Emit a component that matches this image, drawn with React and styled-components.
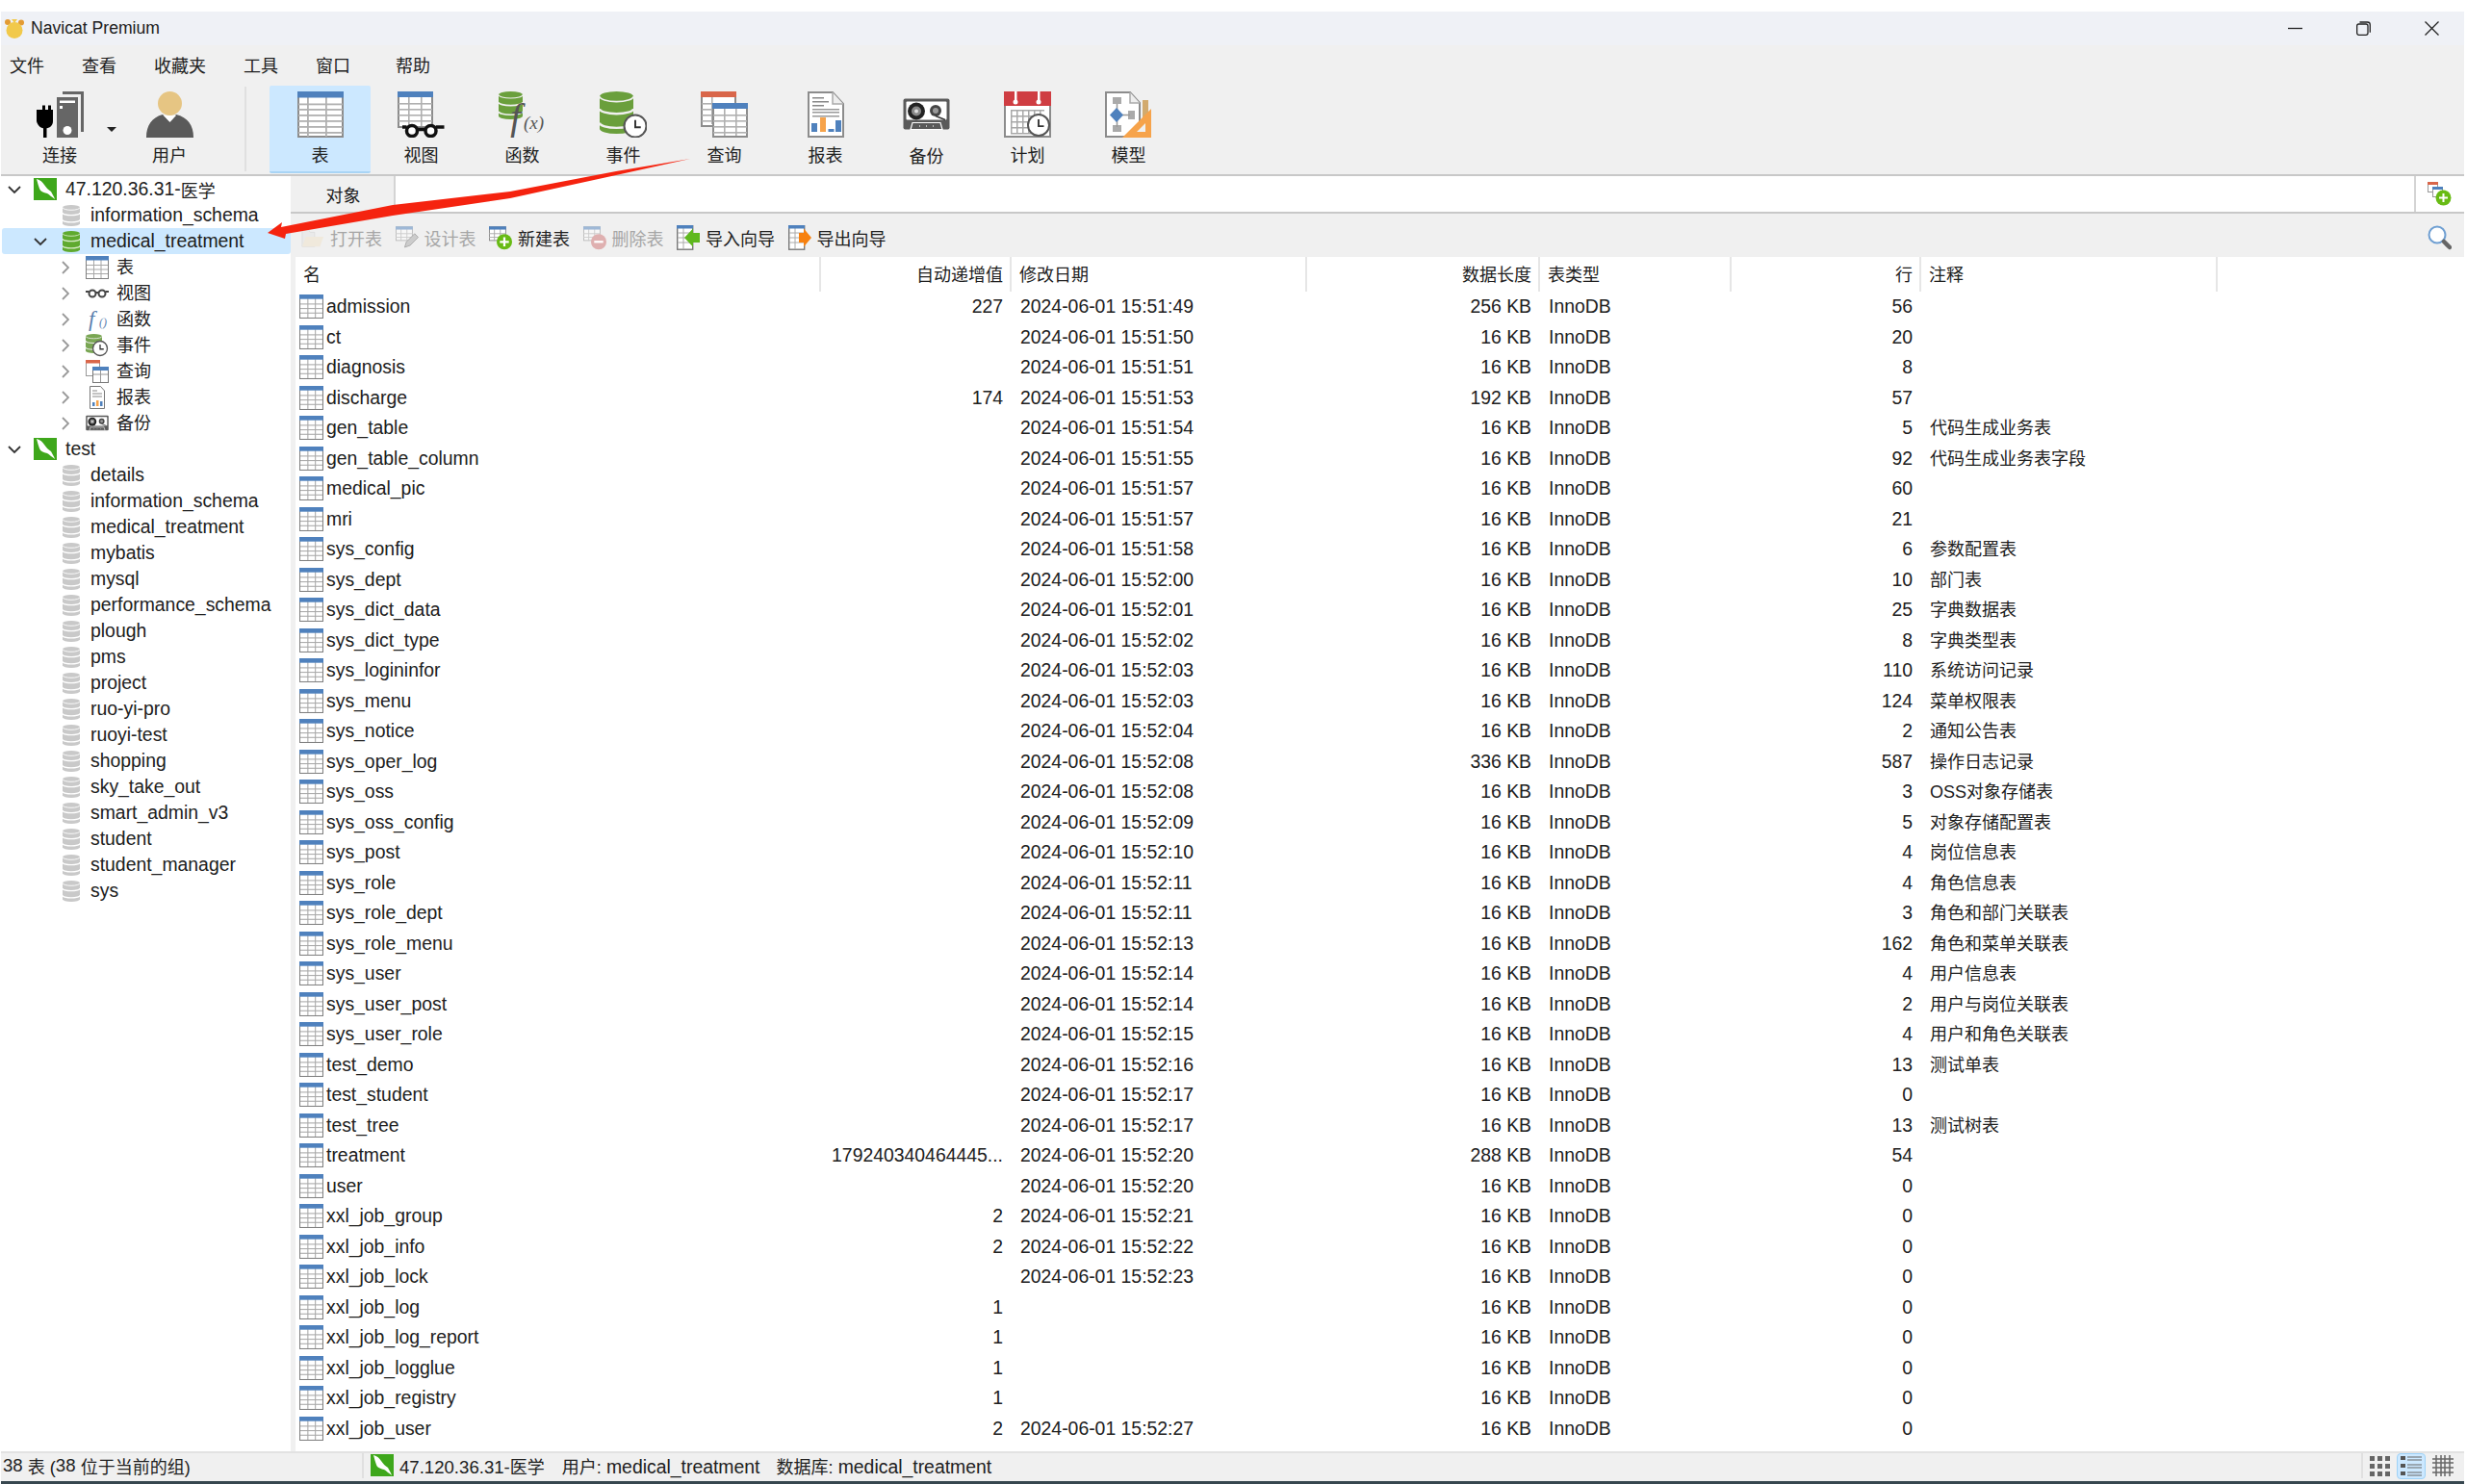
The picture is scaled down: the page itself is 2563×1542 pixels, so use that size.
import React from 'react';
import styled, { createGlobalStyle } from 'styled-components';

const GlobalStyle = createGlobalStyle`
  html, body { margin: 0; padding: 0; background: #ffffff; }
  body {
    font-family: 'Liberation Sans', 'Noto Sans CJK SC', sans-serif;
    font-size: 19.4px;
    color: #202020;
  }
  * { box-sizing: border-box; }
`;

const Page = styled.div`
  position: relative;
  width: 2563px;
  height: 1542px;
  padding: 12px 3px 0 1px;
  background: #ffffff;
  overflow: hidden;
`;

const Window = styled.div`
  display: flex;
  flex-direction: column;
  height: 100%;
  background: #f0f0f0;
`;

const TitleBar = styled.div`
  display: flex;
  align-items: center;
  height: 35px;
  padding: 0 26px 0 3px;
  background: #eff1f6;
  font-size: 17.6px;
  flex: none;
`;

const TitleText = styled.span`
  margin-left: 6px;
`;

const WinControls = styled.div`
  display: flex;
  align-items: center;
  gap: 56px;
  margin-left: auto;
`;

const MenuBar = styled.div`
  display: flex;
  align-items: center;
  gap: 39px;
  height: 42px;
  padding: 0 0 2px 9px;
  font-size: 18px;
  flex: none;

  & > span:last-child { margin-left: 8px; }
`;

const ToolBar = styled.div`
  display: flex;
  height: 94px;
  padding-left: 7px;
  border-bottom: 2px solid #c8c8c8;
  flex: none;
`;

const ToolBtn = styled.div`
  display: flex;
  flex-direction: column;
  align-items: center;
  width: ${p => p.$w || 105}px;
  height: 91px;
  padding-top: 6px;
  background: ${p => (p.$active ? '#cce8ff' : 'transparent')};
  border-bottom: ${p => (p.$active ? '2px solid #a8d4f5' : 'none')};
  border-radius: 2px;
  font-size: 18px;
  flex: none;
`;

const ToolLabel = styled.span`
  margin-top: 7px;
  line-height: 24px;
`;

const Caret = styled.div`
  width: 0;
  height: 0;
  margin: 43px 9px 0 -5px;
  border-left: 5px solid transparent;
  border-right: 5px solid transparent;
  border-top: 5px solid #222;
  flex: none;
`;

const ToolSep = styled.div`
  width: 2px;
  height: 88px;
  margin: 1px 24px 0 32px;
  background: #e0e0e0;
  flex: none;
`;

const Body = styled.div`
  display: flex;
  flex: 1;
  min-height: 0;
`;

const Sidebar = styled.div`
  width: 301px;
  background: #ffffff;
  padding-left: 1px;
  flex: none;
`;

const TreeRow = styled.div`
  display: flex;
  align-items: center;
  height: 27px;
  padding-left: ${p => [6, 33, 62][p.$level]}px;
  background: ${p => (p.$selected ? '#cce8ff' : 'transparent')};
  border-radius: 3px;
  white-space: nowrap;
`;

const ChevronSlot = styled.div`
  display: flex;
  align-items: center;
  width: ${p => [27, 30, 25][p.$level]}px;
  flex: none;
`;

const TreeIconBox = styled.div`
  display: flex;
  justify-content: center;
  width: ${p => [24, 18, 24][p.$level]}px;
  margin-right: ${p => [9, 11, 8][p.$level]}px;
  flex: none;
`;

const Cjk = styled.span`
  font-size: 18px;
`;

const TreeLabel = styled(Cjk)`
  margin-bottom: 3px;
`;

const Main = styled.div`
  display: flex;
  flex-direction: column;
  flex: 1;
  min-width: 0;
`;

const TabBar = styled.div`
  display: flex;
  height: 39px;
  background: #ffffff;
  border-bottom: 2px solid #c8c8c8;
  flex: none;
`;

const Tab = styled.div`
  display: flex;
  align-items: center;
  justify-content: center;
  width: 109px;
  padding-left: 2px;
  background: #f0f0f0;
  border-right: 2px solid #d4d4d4;
  font-size: 18px;
`;

const TabAdd = styled.div`
  display: flex;
  align-items: center;
  justify-content: center;
  width: 52px;
  margin-left: auto;
  border-left: 2px solid #d4d4d4;
  padding-right: 2px;
`;

const ActionBar = styled.div`
  display: flex;
  align-items: center;
  gap: 13.5px;
  height: 45px;
  padding: 5px 13px 0 11px;
  font-size: 18px;
  flex: none;
`;

const Action = styled.div`
  display: flex;
  align-items: center;
  gap: 6px;
  color: ${p => (p.$disabled ? '#a6a6a6' : '#202020')};
`;

const SearchBtn = styled.div`
  display: flex;
  margin-left: auto;
`;

const Table = styled.div`
  flex: 1;
  margin-left: 5px;
  background: #ffffff;
  min-height: 0;
`;

const columns = '546px 198px 307px 242px 199px 197px 308px 1fr';

const HeadRow = styled.div`
  display: grid;
  grid-template-columns: ${columns};
  height: 36px;
  font-size: 18px;
`;

const HeadCell = styled.div`
  display: flex;
  align-items: center;
  justify-content: ${p => (p.$right ? 'flex-end' : 'flex-start')};
  padding: 0 7px 2px 8px;
  border-right: ${p => (p.$last ? 'none' : '2px solid #e6e6e6')};
`;

const DataRow = styled.div`
  display: grid;
  grid-template-columns: ${columns};
  height: 31.5px;
`;

const Cell = styled.div`
  display: flex;
  align-items: center;
  justify-content: ${p => (p.$right ? 'flex-end' : 'flex-start')};
  padding: 0 9px;
  white-space: nowrap;
  overflow: hidden;
`;

const NameCell = styled(Cell)`
  gap: 3px;
  padding-left: 4px;
`;

const Comment = styled(Cell)`
  padding-bottom: 3px;
  font-size: 18px;
`;

const StatusBar = styled.div`
  display: flex;
  align-items: center;
  height: 31px;
  padding: 0 0 3px 2px;
  background: #f0f0f0;
  border-top: 2px solid #e2e2e2;
  font-size: 18.6px;
  flex: none;
`;

const StatusCount = styled.div`
  width: 373px;
  height: 100%;
  display: flex;
  align-items: center;
  white-space: pre;
  flex: none;
`;

const StatusInfo = styled.div`
  display: flex;
  align-items: center;
  height: 100%;
  padding-left: 7px;
  border-left: 2px solid #e0e0e0;
`;

const StatusItem = styled.span`
  margin-left: ${p => p.$gap || 0}px;
`;

const StatusValue = styled.span`
  font-size: 19.4px;
`;

const ViewSwitch = styled.div`
  display: flex;
  align-items: center;
  gap: 7px;
  height: 100%;
  margin-left: auto;
  padding: 0 11px 0 7px;
  border-left: 2px solid #e0e0e0;
`;

const ViewBtn = styled.div`
  display: flex;
  align-items: center;
  justify-content: center;
  width: ${p => (p.$active ? '30px' : 'auto')};
  height: 27px;
  background: ${p => (p.$active ? '#cce8ff' : 'transparent')};
  border: ${p => (p.$active ? '1.5px solid #9fd2f7' : 'none')};
  border-radius: 4px;
`;

const BottomEdge = styled.div`
  height: 3px;
  background: #37474f;
  flex: none;
`;

const ArrowLayer = styled.svg`
  position: absolute;
  left: 0;
  top: 0;
  pointer-events: none;
`;

const BLUE = '#4f81bd';
const GREEN = '#6a9f3c';

const TableIcon = () => (
  <svg width="48" height="48" viewBox="0 0 48 48">
    <rect x="1" y="1" width="46" height="46" fill="#fff" stroke="#8c8c8c" strokeWidth="2" />
    {[12.5, 18, 24, 30, 36, 42].map(y => (
      <rect key={y} x="1" y={y} width="46" height="1.800" fill="#b0b0b0" />
    ))}
    {[10, 29].map(x => (
      <rect key={x} x={x} y="6" width="1.800" height="41" fill="#b0b0b0" />
    ))}
    <rect width="48" height="6.500" fill={BLUE} />
  </svg>
);

const SmallTable = ({ size = 24 }) => (
  <svg width={size} height={size} viewBox="0 0 24 24">
    <rect x="0.500" y="0.500" width="23" height="23" fill="#fff" stroke="#808080" />
    {[9, 13.5, 18].map(y => (
      <rect key={y} x="1" y={y} width="22" height="1" fill="#a8a8a8" />
    ))}
    {[8, 15.5].map(x => (
      <rect key={x} x={x} y="4" width="1" height="19" fill="#a8a8a8" />
    ))}
    <rect width="24" height="4.500" fill={BLUE} />
  </svg>
);

const Cylinder = ({ x, y, w, h, color, band = '#fff' }) => {
  const rx = w / 2;
  const ry = h * 0.12;
  const layer = h / 3;
  return (
    <g>
      <path
        d={`M${x} ${y + ry}a${rx} ${ry} 0 0 1 ${w} 0v${h - 2 * ry}a${rx} ${ry} 0 0 1 ${-w} 0z`}
        fill={color}
      />
      {[1, 2].map(i => (
        <path
          key={i}
          d={`M${x} ${y + ry + layer * i - 2}a${rx} ${ry} 0 0 0 ${w} 0`}
          fill="none"
          stroke={band}
          strokeWidth={h * 0.055}
        />
      ))}
      <path d={`M${x} ${y + ry}a${rx} ${ry} 0 0 0 ${w} 0`} fill="none" stroke={band} strokeWidth={h * 0.04} />
    </g>
  );
};

const Clock = ({ cx, cy, r }) => (
  <g>
    <circle cx={cx} cy={cy} r={r} fill="#fff" stroke="#555" strokeWidth={r * 0.18} />
    <path d={`M${cx} ${cy - r * 0.55}V${cy + r * 0.1}H${cx + r * 0.5}`} fill="none" stroke="#333" strokeWidth={r * 0.17} />
  </g>
);

const PlugIcon = () => (
  <svg width="49" height="48" viewBox="0 0 49 48">
    <path d="M27 0h22v42h-3V3H27z" fill="#666" />
    <rect x="21" y="6" width="22" height="42" fill="#666" />
    <rect x="24" y="9.500" width="16" height="2.500" fill="#fff" />
    <rect x="24" y="15" width="3" height="3" fill="#fff" />
    <circle cx="32" cy="40.500" r="4.500" fill="#fff" />
    <path d="M3 19h3v-4.500h3V19h3v-4.500h3V19h2v12c0 4-3 7-6.500 7.300V48h-3.500v-9.700C4 38 1 35 0 31V19z" fill="#000" />
  </svg>
);

const UserIcon = () => (
  <svg width="49" height="48" viewBox="0 0 49 48">
    <path d="M0 48c0-13 6-21 17-24l7 7 7-7c12 3 18 11 18 24z" fill="#5a5a5a" />
    <path d="M18 25h13l-6.500 7z" fill="#fff" />
    <ellipse cx="24.500" cy="12.500" rx="12.500" ry="12.500" fill="#e6c583" />
  </svg>
);

const Glasses = () => (
  <g fill="#fff" stroke="#111" strokeWidth="3.500">
    <circle cx="15" cy="41" r="5.500" />
    <circle cx="34.500" cy="41" r="5.500" />
    <path d="M5 37h4.500M20.500 39.500h8.500M40 37h8.500" fill="none" />
  </g>
);

const ViewIcon = () => (
  <svg width="49" height="48" viewBox="0 0 49 48">
    <rect x="1" y="1" width="35" height="36" fill="#fff" stroke="#8c8c8c" strokeWidth="2" />
    {[12, 18, 24, 30].map(y => (
      <rect key={y} x="1" y={y} width="35" height="1.600" fill="#b0b0b0" />
    ))}
    {[11, 24].map(x => (
      <rect key={x} x={x} y="6" width="1.600" height="30" fill="#b0b0b0" />
    ))}
    <rect width="37" height="6" fill={BLUE} />
    <Glasses />
  </svg>
);

const FuncIcon = () => (
  <svg width="49" height="48" viewBox="0 0 49 48">
    <Cylinder x={0} y={0} w={25} h={29} color={GREEN} band="#f0f0f0" />
    <text x="12" y="40" fontFamily="Liberation Serif, serif" fontStyle="italic" fontSize="40" fill="#555">f</text>
    <text x="26" y="39" fontFamily="Liberation Serif, serif" fontStyle="italic" fontSize="19" fill="#555">(x)</text>
  </svg>
);

const EventIcon = () => (
  <svg width="49" height="48" viewBox="0 0 49 48">
    <Cylinder x={0} y={0} w={35} h={44} color={GREEN} band="#f0f0f0" />
    <Clock cx={37} cy={36} r={11.500} />
  </svg>
);

const QueryIcon = () => (
  <svg width="49" height="48" viewBox="0 0 49 48">
    <rect x="1" y="1" width="35" height="35" fill="#fff" stroke="#8c8c8c" strokeWidth="2" />
    {[12, 18, 24, 30].map(y => (
      <rect key={y} x="1" y={y} width="14" height="1.600" fill="#b0b0b0" />
    ))}
    <rect x="11" y="6" width="1.600" height="28" fill="#b0b0b0" />
    <rect width="37" height="6" fill="#d9664a" />
    <rect x="13" y="13" width="35" height="34" fill="#fff" stroke="#8c8c8c" strokeWidth="2" />
    {[24, 30, 36, 42].map(y => (
      <rect key={y} x="13" y={y} width="35" height="1.600" fill="#b0b0b0" />
    ))}
    {[24, 36].map(x => (
      <rect key={x} x={x} y="18" width="1.600" height="28" fill="#b0b0b0" />
    ))}
    <rect x="12" y="12" width="37" height="6" fill={BLUE} />
  </svg>
);

const ReportIcon = () => (
  <svg width="49" height="48" viewBox="0 0 49 48">
    <path d="M7 1h25l11 12v34H7z" fill="#fff" stroke="#8c8c8c" strokeWidth="2" />
    <path d="M32 1v12h11" fill="#eee" stroke="#aaa" strokeWidth="1.500" />
    {[6, 10, 14].map(y => (
      <rect key={y} x="11" y={y} width={y === 10 ? 17 : 12} height="1.500" fill="#888" />
    ))}
    {[18, 21, 25].map(y => (
      <rect key={y} x="11" y={y} width="28" height="1.500" fill="#999" />
    ))}
    <rect x="10" y="33" width="6" height="9" fill={BLUE} />
    <rect x="19" y="27" width="6" height="15" fill="#f6a34b" />
    <rect x="27.500" y="39" width="6" height="3" fill={BLUE} />
    <rect x="35" y="30" width="6" height="12" fill={BLUE} />
  </svg>
);

const BackupIcon = ({ size = 49 }) => (
  <svg width={size} height={size} viewBox="0 0 49 48">
    <rect x="0.500" y="7" width="48" height="32" rx="2" fill="#5a5a5a" />
    <rect x="3.500" y="10" width="42" height="19" rx="1" fill="#fff" />
    <circle cx="14" cy="20" r="9" fill="#222" />
    <circle cx="14" cy="20" r="5" fill="#888" />
    <circle cx="14" cy="20" r="2" fill="#ddd" />
    <circle cx="34" cy="19.500" r="6" fill="#444" />
    <circle cx="34" cy="19.500" r="3" fill="#999" />
    <path d="M34 25l10 4" stroke="#333" strokeWidth="1.500" />
    <path d="M8 39l2-7h29l2 7z" fill="#5a5a5a" stroke="#fff" strokeWidth="1.200" />
    <path d="M17 35.500h1M24 35.500h1M31 35.500h1" stroke="#ddd" strokeWidth="1.500" />
  </svg>
);

const CalendarIcon = () => (
  <svg width="49" height="48" viewBox="0 0 49 48">
    <rect x="1" y="1" width="47" height="46" fill="#fff" stroke="#8c8c8c" strokeWidth="2" />
    <rect width="49" height="15" fill="#cf3d42" />
    {[12, 36].map(x => (
      <g key={x}>
        <rect x={x - 1} y="0" width="2.500" height="10" fill="#fff" />
        <circle cx={x} cy="11" r="2.500" fill="#fff" />
      </g>
    ))}
    {[6, 12, 18, 24, 30, 36].map(x => (
      <rect key={x} x={x + 1} y="19" width="1.500" height="24" fill="#a8a8a8" />
    ))}
    {[19, 25, 31, 37, 43].map(y => (
      <rect key={y} x="7" y={y} width="35" height="1.500" fill="#a8a8a8" />
    ))}
    <Clock cx={36} cy={35} r={11} />
  </svg>
);

const ModelIcon = () => (
  <svg width="49" height="48" viewBox="0 0 49 48">
    <path d="M1 1h25l10 11v35H1z" fill="#fff" stroke="#8c8c8c" strokeWidth="2" />
    <path d="M26 1v11h10" fill="#eee" stroke="#aaa" strokeWidth="1.500" />
    <rect x="8" y="6" width="9" height="7" fill="#aaa" />
    <rect x="8" y="35" width="9" height="7" fill="#aaa" />
    <rect x="24" y="20" width="7" height="9" fill="#aaa" />
    <path d="M12.500 13v24M18 24.500h8" stroke="#999" strokeWidth="1.500" />
    <path d="M12 17l7 7.500-7 7.500-7-7.500z" fill={BLUE} />
    <rect x="39" y="9" width="6" height="24" fill="#d2aa6e" />
    <path d="M48 18v30H18z" fill="#f6a34b" />
    <path d="M42 33v9h-9z" fill="#f0f0f0" />
  </svg>
);

const FolderIcon = () => (
  <svg width="24" height="24" viewBox="0 0 26 24" opacity="0.55">
    <path d="M1 22V3h7l2 3h5v16z" fill="#e6e6e6" stroke="#cfcfcf" />
    <path d="M1 22l4-11h20l-4 11z" fill="#f0e4cc" />
  </svg>
);

const BadgeTable = ({ children, opacity = 1 }) => (
  <svg width="24" height="25" viewBox="0 0 25.500 26">
    <g opacity={opacity}>
      <rect x="0.500" y="0.500" width="18" height="15" fill="#fff" stroke="#888" />
      <path d="M0 8h19M0 12h19M6 3v13M12.500 3v13" stroke="#aaa" />
      <rect width="19" height="3.500" fill={BLUE} />
    </g>
    {children}
  </svg>
);

const ImportExportIcon = ({ color, flip }) => (
  <svg width="24" height="26" viewBox="0 0 24 26">
    <rect x="0.700" y="0.700" width="16" height="24.500" fill="#fff" stroke="#777" strokeWidth="1.400" />
    <path d="M1 8h16M1 13h16M1 18h16M7 3v22" stroke="#aaa" />
    <rect width="17" height="3.500" fill={BLUE} />
    <path d={flip ? 'M11 8h5V3.500L24 13l-8 9.500V18h-5z' : 'M24 8h-7V3.500L8 13l9 9.500V18h7z'} fill={color} />
  </svg>
);

const Search = () => (
  <svg width="25" height="26" viewBox="0 0 25 26">
    <circle cx="10" cy="10" r="8.500" fill="#fff" stroke="#6f9fd2" strokeWidth="2" />
    <path d="M17 17l6 6" stroke="#666" strokeWidth="4.500" strokeLinecap="round" />
  </svg>
);

const AddTab = () => (
  <svg width="25" height="25" viewBox="0 0 25 25">
    <rect x="0.500" y="0.500" width="10" height="10" fill="#fff" stroke="#999" />
    <rect width="11" height="3" fill="#d9664a" />
    <rect x="5.500" y="5.500" width="10" height="10" fill="#fff" stroke="#999" />
    <rect x="5" y="5" width="11" height="3" fill={BLUE} />
    <circle cx="16.500" cy="16.500" r="8" fill="#68bb14" />
    <path d="M16.500 12v9M12 16.500h9" stroke="#fff" strokeWidth="2" />
  </svg>
);

const LogoIcon = () => (
  <svg width="22" height="21" viewBox="0 0 22 21">
    <circle cx="4" cy="4" r="3" fill="#e39b34" />
    <circle cx="18" cy="4.500" r="3" fill="#e39b34" />
    <circle cx="11" cy="12.500" r="8.500" fill="#f1c94b" />
    <path d="M8 1h6l-3 4z" fill="#f1c94b" />
  </svg>
);

const Minimize = () => (
  <svg width="15" height="15" viewBox="0 0 15 15">
    <path d="M0 7.500h15" stroke="#222" strokeWidth="1.300" />
  </svg>
);

const Restore = () => (
  <svg width="15" height="15" viewBox="0 0 15 15">
    <rect x="0.700" y="3" width="11.300" height="11.300" rx="2" fill="none" stroke="#222" strokeWidth="1.300" />
    <path d="M3.500 1h8c1.600 0 2.800 1.200 2.800 2.800v8" fill="none" stroke="#222" strokeWidth="1.300" />
  </svg>
);

const Close = () => (
  <svg width="15" height="15" viewBox="0 0 15 15">
    <path d="M0.500 0.500l14 14M14.500 0.500l-14 14" stroke="#222" strokeWidth="1.300" />
  </svg>
);

const Chevron = ({ open, small }) => (
  <svg width={small ? 8 : 14} height="14" viewBox={small ? '0 0 8 14' : '0 0 14 14'}>
    <path
      d={small ? 'M1 1l6 6-6 6' : 'M1 4l6 6 6-6'}
      fill="none"
      stroke={open ? '#333' : '#999'}
      strokeWidth="1.800"
    />
  </svg>
);

const MySql = ({ size = 24 }) => (
  <svg width={size} height={size} viewBox="0 0 24 24">
    <rect width="24" height="23" fill="#3ea71b" />
    <path d="M3 1c4 1 6 3 8 6 2 3 4 5 7 7 1 2 3 5 4 8-3-2-6-5-8-6-4-1-7-2-8-5-1-3-2-6-3-10z" fill="#fff" />
  </svg>
);

const DbIcon = ({ on }) => (
  <svg width="18" height="22" viewBox="0 0 18 22">
    <Cylinder x={0} y={0} w={18} h={22} color={on ? '#5faa2f' : '#c9c9c9'} band={on ? '#d8ecc8' : '#fff'} />
  </svg>
);

const TreeGlasses = () => (
  <svg width="24" height="22" viewBox="0 0 24 22">
    <g fill="none" stroke="#444" strokeWidth="2">
      <circle cx="7" cy="11" r="3.500" />
      <circle cx="17" cy="11" r="3.500" />
      <path d="M0 9h3.500M10.500 10h3M20.500 9h3.500" />
    </g>
  </svg>
);

const TreeFunc = () => (
  <svg width="24" height="24" viewBox="0 0 24 24">
    <text x="3" y="19" fontFamily="Liberation Serif, serif" fontStyle="italic" fontSize="23" fill="#5b7fae">f</text>
    <text x="14" y="19" fontFamily="Liberation Serif, serif" fontStyle="italic" fontSize="12" fill="#5b7fae">()</text>
  </svg>
);

const TreeEvent = () => (
  <svg width="24" height="24" viewBox="0 0 24 24">
    <Cylinder x={0} y={0} w={17} h={20} color="#79a653" band="#eee" />
    <Clock cx={15} cy={15} r={7.500} />
  </svg>
);

const TreeQuery = () => (
  <svg width="24" height="24" viewBox="0 0 24 24">
    <rect x="0.500" y="0.500" width="14" height="16" fill="#fff" stroke="#999" />
    <rect width="15" height="3.500" fill="#d9664a" />
    <rect x="7.500" y="7.500" width="16" height="16" fill="#fff" stroke="#777" />
    <path d="M8 15h15M15.500 11v12" stroke="#999" />
    <rect x="7" y="7" width="17" height="4" fill={BLUE} />
  </svg>
);

const TreeReport = () => (
  <svg width="24" height="24" viewBox="0 0 24 24">
    <path d="M4.500 0.500h11l4 4.500v18.500h-15z" fill="#fff" stroke="#777" />
    <path d="M7 5h5M7 8h10M7 11h10" stroke="#888" />
    <rect x="7" y="17" width="2.500" height="4" fill={BLUE} />
    <rect x="11" y="15" width="2.500" height="6" fill="#f6a34b" />
    <rect x="15" y="16" width="2.500" height="5" fill={BLUE} />
  </svg>
);

const dots = [0, 1, 2];

const ViewDots = () => (
  <svg width="21" height="21" viewBox="0 0 21 21">
    {dots.map(r => dots.map(c => <rect key={`${r}${c}`} x={c * 8} y={r * 8} width="5" height="5" fill="#666" />))}
  </svg>
);

const ViewList = () => (
  <svg width="22" height="22" viewBox="0 0 22 22">
    {dots.map(r => (
      <g key={r}>
        <rect x="0" y={1 + r * 8} width="5" height="4" fill="#555" />
        <path d={`M7 ${2 + r * 8}h15M7 ${5 + r * 8}h15`} stroke="#666" strokeWidth="1.200" />
      </g>
    ))}
  </svg>
);

const ViewGrid = () => (
  <svg width="22" height="22" viewBox="0 0 22 22">
    <path d="M0 4h22M0 8h22M0 13h22M0 18h22M4 0v22M9 0v22M13 0v22M18 0v22" stroke="#666" strokeWidth="1.500" fill="none" />
  </svg>
);

const tools = [
  { label: '视图', icon: <ViewIcon /> },
  { label: '函数', icon: <FuncIcon /> },
  { label: '事件', icon: <EventIcon /> },
  { label: '查询', icon: <QueryIcon /> },
  { label: '报表', icon: <ReportIcon /> },
  { label: '备份', icon: <BackupIcon /> },
  { label: '计划', icon: <CalendarIcon /> },
  { label: '模型', icon: <ModelIcon /> }
];

const treeChildren = [
  { label: '表', icon: <SmallTable /> },
  { label: '视图', icon: <TreeGlasses /> },
  { label: '函数', icon: <TreeFunc /> },
  { label: '事件', icon: <TreeEvent /> },
  { label: '查询', icon: <TreeQuery /> },
  { label: '报表', icon: <TreeReport /> },
  { label: '备份', icon: <BackupIcon size={24} /> }
];

const testDbs = [
  'details', 'information_schema', 'medical_treatment', 'mybatis', 'mysql',
  'performance_schema', 'plough', 'pms', 'project', 'ruo-yi-pro', 'ruoyi-test',
  'shopping', 'sky_take_out', 'smart_admin_v3', 'student', 'student_manager', 'sys'
];

const d = t => `2024-06-01 15:${t}`;

// name, auto increment, time, data length, rows, comment
const rows = [
  ['admission', '227', d('51:49'), '256 KB', '56', ''],
  ['ct', '', d('51:50'), '16 KB', '20', ''],
  ['diagnosis', '', d('51:51'), '16 KB', '8', ''],
  ['discharge', '174', d('51:53'), '192 KB', '57', ''],
  ['gen_table', '', d('51:54'), '16 KB', '5', '代码生成业务表'],
  ['gen_table_column', '', d('51:55'), '16 KB', '92', '代码生成业务表字段'],
  ['medical_pic', '', d('51:57'), '16 KB', '60', ''],
  ['mri', '', d('51:57'), '16 KB', '21', ''],
  ['sys_config', '', d('51:58'), '16 KB', '6', '参数配置表'],
  ['sys_dept', '', d('52:00'), '16 KB', '10', '部门表'],
  ['sys_dict_data', '', d('52:01'), '16 KB', '25', '字典数据表'],
  ['sys_dict_type', '', d('52:02'), '16 KB', '8', '字典类型表'],
  ['sys_logininfor', '', d('52:03'), '16 KB', '110', '系统访问记录'],
  ['sys_menu', '', d('52:03'), '16 KB', '124', '菜单权限表'],
  ['sys_notice', '', d('52:04'), '16 KB', '2', '通知公告表'],
  ['sys_oper_log', '', d('52:08'), '336 KB', '587', '操作日志记录'],
  ['sys_oss', '', d('52:08'), '16 KB', '3', 'OSS对象存储表'],
  ['sys_oss_config', '', d('52:09'), '16 KB', '5', '对象存储配置表'],
  ['sys_post', '', d('52:10'), '16 KB', '4', '岗位信息表'],
  ['sys_role', '', d('52:11'), '16 KB', '4', '角色信息表'],
  ['sys_role_dept', '', d('52:11'), '16 KB', '3', '角色和部门关联表'],
  ['sys_role_menu', '', d('52:13'), '16 KB', '162', '角色和菜单关联表'],
  ['sys_user', '', d('52:14'), '16 KB', '4', '用户信息表'],
  ['sys_user_post', '', d('52:14'), '16 KB', '2', '用户与岗位关联表'],
  ['sys_user_role', '', d('52:15'), '16 KB', '4', '用户和角色关联表'],
  ['test_demo', '', d('52:16'), '16 KB', '13', '测试单表'],
  ['test_student', '', d('52:17'), '16 KB', '0', ''],
  ['test_tree', '', d('52:17'), '16 KB', '13', '测试树表'],
  ['treatment', '179240340464445...', d('52:20'), '288 KB', '54', ''],
  ['user', '', d('52:20'), '16 KB', '0', ''],
  ['xxl_job_group', '2', d('52:21'), '16 KB', '0', ''],
  ['xxl_job_info', '2', d('52:22'), '16 KB', '0', ''],
  ['xxl_job_lock', '', d('52:23'), '16 KB', '0', ''],
  ['xxl_job_log', '1', '', '16 KB', '0', ''],
  ['xxl_job_log_report', '1', '', '16 KB', '0', ''],
  ['xxl_job_logglue', '1', '', '16 KB', '0', ''],
  ['xxl_job_registry', '1', '', '16 KB', '0', ''],
  ['xxl_job_user', '2', d('52:27'), '16 KB', '0', '']
];

const DbRow = ({ name }) => (
  <TreeRow $level={1}>
    <ChevronSlot $level={1} />
    <TreeIconBox $level={1}>
      <DbIcon />
    </TreeIconBox>
    {name}
  </TreeRow>
);

const App = () => (
  <Page>
    <GlobalStyle />
    <Window>
      <TitleBar>
        <LogoIcon />
        <TitleText>Navicat Premium</TitleText>
        <WinControls>
          <Minimize />
          <Restore />
          <Close />
        </WinControls>
      </TitleBar>

      <MenuBar>
        {['文件', '查看', '收藏夹', '工具', '窗口', '帮助'].map(m => (
          <span key={m}>{m}</span>
        ))}
      </MenuBar>

      <ToolBar>
        <ToolBtn $w={108}>
          <PlugIcon />
          <ToolLabel>连接</ToolLabel>
        </ToolBtn>
        <Caret />
        <ToolBtn $w={92}>
          <UserIcon />
          <ToolLabel>用户</ToolLabel>
        </ToolBtn>
        <ToolSep />
        <ToolBtn $active>
          <TableIcon />
          <ToolLabel>表</ToolLabel>
        </ToolBtn>
        {tools.map(t => (
          <ToolBtn key={t.label}>
            {t.icon}
            <ToolLabel>{t.label}</ToolLabel>
          </ToolBtn>
        ))}
      </ToolBar>

      <Body>
        <Sidebar>
          <TreeRow $level={0}>
            <ChevronSlot $level={0}>
              <Chevron open />
            </ChevronSlot>
            <TreeIconBox $level={0}>
              <MySql />
            </TreeIconBox>
            47.120.36.31-<Cjk>医学</Cjk>
          </TreeRow>
          <DbRow name="information_schema" />
          <TreeRow $level={1} $selected>
            <ChevronSlot $level={1}>
              <Chevron open />
            </ChevronSlot>
            <TreeIconBox $level={1}>
              <DbIcon on />
            </TreeIconBox>
            medical_treatment
          </TreeRow>
          {treeChildren.map(c => (
            <TreeRow key={c.label} $level={2}>
              <ChevronSlot $level={2}>
                <Chevron small />
              </ChevronSlot>
              <TreeIconBox $level={2}>{c.icon}</TreeIconBox>
              <TreeLabel>{c.label}</TreeLabel>
            </TreeRow>
          ))}
          <TreeRow $level={0}>
            <ChevronSlot $level={0}>
              <Chevron open />
            </ChevronSlot>
            <TreeIconBox $level={0}>
              <MySql />
            </TreeIconBox>
            test
          </TreeRow>
          {testDbs.map(n => (
            <DbRow key={n} name={n} />
          ))}
        </Sidebar>

        <Main>
          <TabBar>
            <Tab>对象</Tab>
            <TabAdd>
              <AddTab />
            </TabAdd>
          </TabBar>
          <ActionBar>
            <Action $disabled>
              <FolderIcon />
              打开表
            </Action>
            <Action $disabled>
              <BadgeTable opacity={0.5}>
                <path d="M10 23l2-6 9-9 4 4-9 9z" fill="#ccc" stroke="#aaa" />
              </BadgeTable>
              设计表
            </Action>
            <Action>
              <BadgeTable>
                <circle cx="17" cy="17" r="8.500" fill="#68bb14" />
                <path d="M17 12v10M12 17h10" stroke="#fff" strokeWidth="2.400" />
              </BadgeTable>
              新建表
            </Action>
            <Action $disabled>
              <BadgeTable opacity={0.5}>
                <circle cx="17" cy="17" r="8.500" fill="#dfb0b0" />
                <path d="M12 17h10" stroke="#fff" strokeWidth="2.400" />
              </BadgeTable>
              删除表
            </Action>
            <Action>
              <ImportExportIcon color="#5fb81e" />
              导入向导
            </Action>
            <Action>
              <ImportExportIcon color="#f7810f" flip />
              导出向导
            </Action>
            <SearchBtn>
              <Search />
            </SearchBtn>
          </ActionBar>
          <Table>
            <HeadRow>
              <HeadCell>名</HeadCell>
              <HeadCell $right>自动递增值</HeadCell>
              <HeadCell>修改日期</HeadCell>
              <HeadCell $right>数据长度</HeadCell>
              <HeadCell>表类型</HeadCell>
              <HeadCell $right>行</HeadCell>
              <HeadCell>注释</HeadCell>
              <HeadCell $last />
            </HeadRow>
            {rows.map(([name, auto, time, size, count, note]) => (
              <DataRow key={name}>
                <NameCell>
                  <SmallTable size={25} />
                  {name}
                </NameCell>
                <Cell $right>{auto}</Cell>
                <Cell>{time}</Cell>
                <Cell $right>{size}</Cell>
                <Cell>InnoDB</Cell>
                <Cell $right>{count}</Cell>
                <Comment>{note}</Comment>
              </DataRow>
            ))}
          </Table>
        </Main>
      </Body>

      <StatusBar>
        <StatusCount>
          38 <Cjk>表 (</Cjk>38 <Cjk>位于当前的组)</Cjk>
        </StatusCount>
        <StatusInfo>
          <MySql />
          <StatusItem $gap={6}>47.120.36.31-<Cjk>医学</Cjk></StatusItem>
          <StatusItem $gap={18}><Cjk>用户:</Cjk> <StatusValue>medical_treatment</StatusValue></StatusItem>
          <StatusItem $gap={17}><Cjk>数据库:</Cjk> <StatusValue>medical_treatment</StatusValue></StatusItem>
        </StatusInfo>
        <ViewSwitch>
          <ViewBtn>
            <ViewDots />
          </ViewBtn>
          <ViewBtn $active>
            <ViewList />
          </ViewBtn>
          <ViewBtn>
            <ViewGrid />
          </ViewBtn>
        </ViewSwitch>
      </StatusBar>
      <BottomEdge />
    </Window>

    <ArrowLayer width="2563" height="1542" viewBox="0 0 2563 1542">
      <path
        d="M278 242L293 231L292 236L408 213L530 199L640 178L717 165L640 182L530 206L408 224L297 243L296 248Z"
        fill="#f5230f"
      />
    </ArrowLayer>
  </Page>
);

export default App;
